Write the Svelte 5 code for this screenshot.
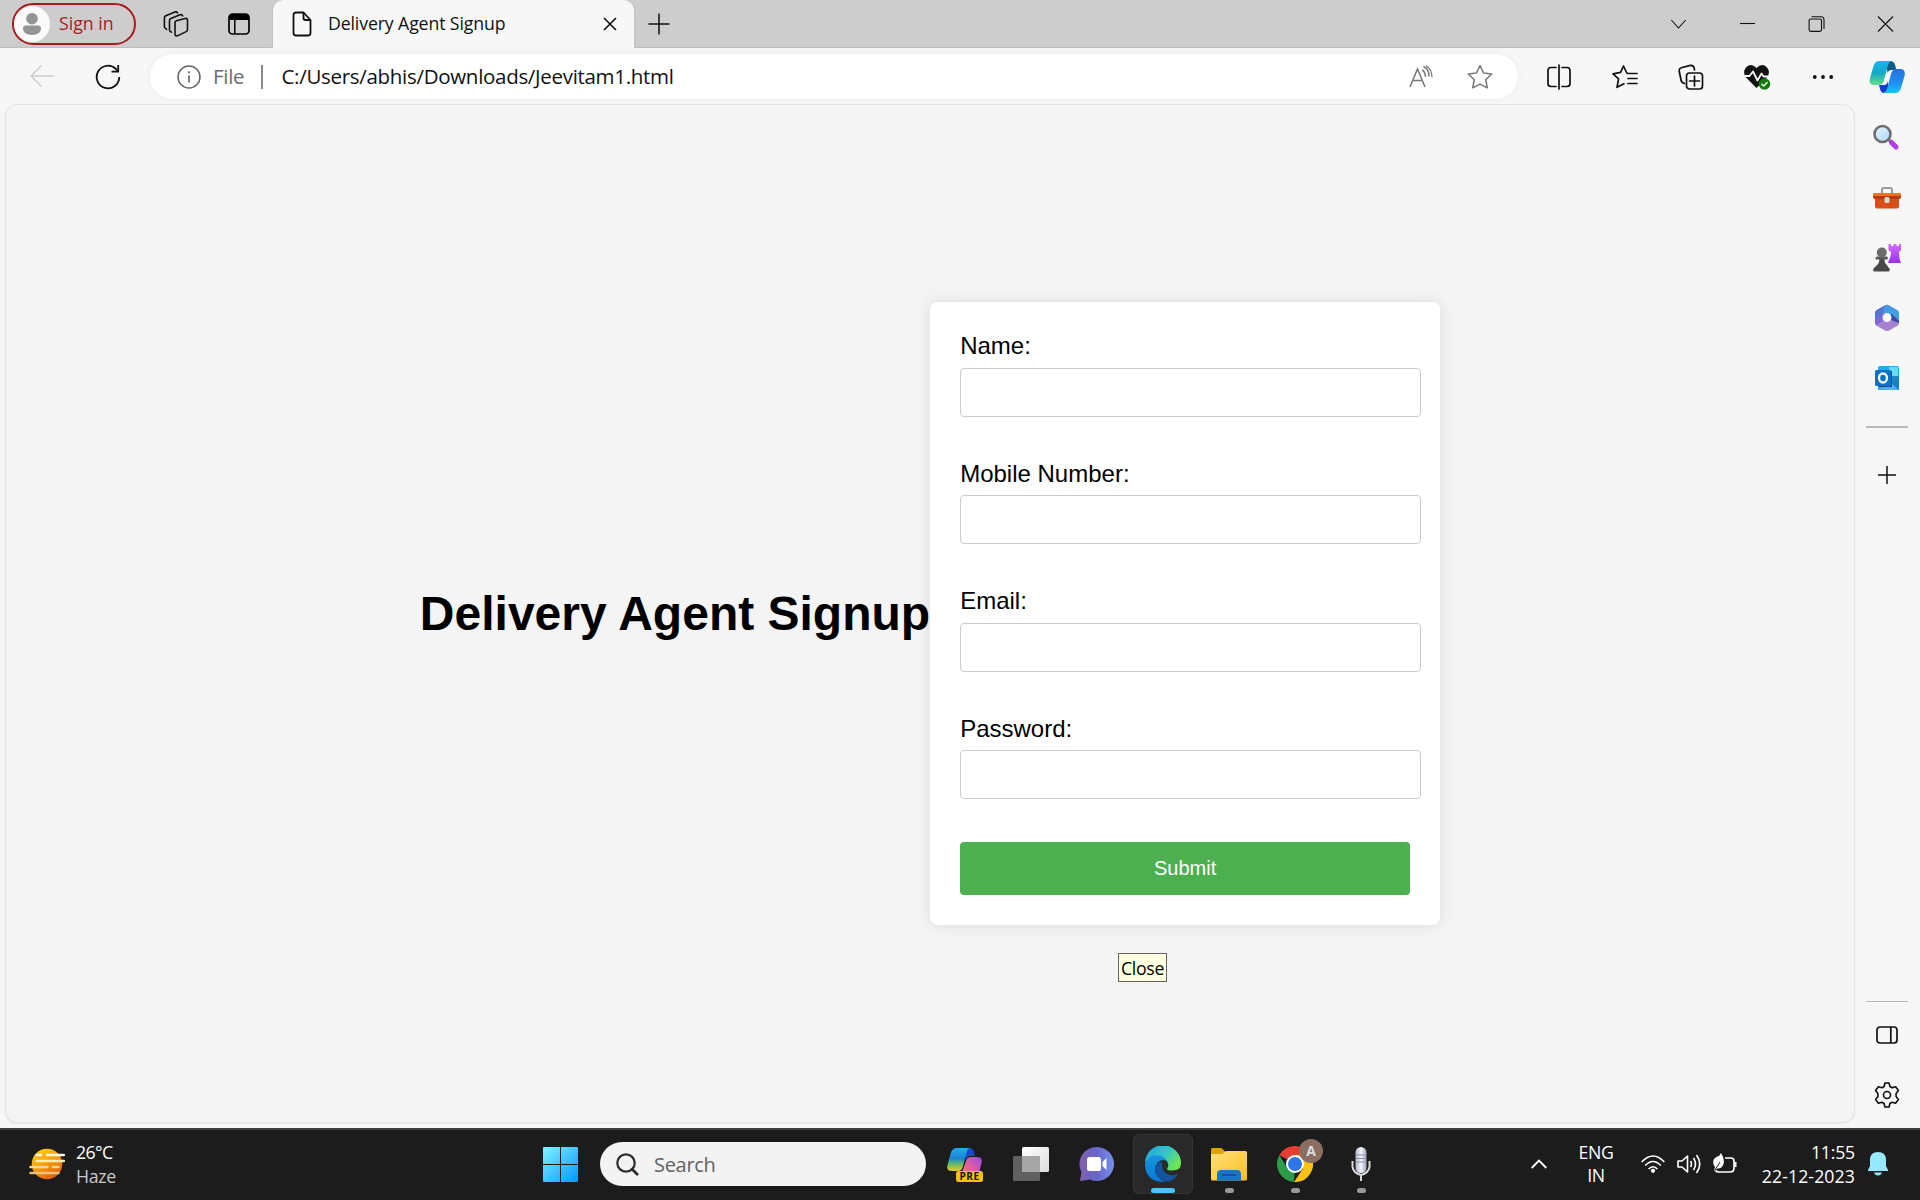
<script>
  const fields = [
    { id: 'name', label: 'Name:', type: 'text' },
    { id: 'mobile', label: 'Mobile Number:', type: 'tel' },
    { id: 'email', label: 'Email:', type: 'email' },
    { id: 'password', label: 'Password:', type: 'password' }
  ];
</script>

<div class="desktop">
  <header class="tabs">
    <div class="signin">
      <svg width="36" height="36" viewBox="0 0 36 36"><circle cx="18" cy="18" r="18" fill="#fafafa" /><circle cx="18" cy="12.700" r="5.800" fill="#949494" /><path d="M9 22.500q0-3 3-3h12q3 0 3 3 0 6.500-9 6.500t-9-6.500z" fill="#949494" /></svg>
      <span>Sign in</span>
    </div>
    <svg class="workspaces" width="26" height="26" viewBox="0 0 26 26" fill="none" stroke="#111" stroke-width="1.600" stroke-linejoin="round" stroke-linecap="round">
      <path d="M12 11.700q0-1.500 1.400-2l8.800-2.200q2.300-.6 2.300 1.700v9.300q0 1.400-1.300 2.100l-8.300 4q-2.900 1-2.900-1.600z" />
      <path d="M8.400 21.200l-1.200-.8q-.7-.5-.7-1.600V9.500q0-1.500 1.400-2.100l9-3.600q2-.6 2.800 1" />
      <path d="M3.600 18.300l-1.500-1.300q-.7-.6-.7-1.600V6.800q0-1.500 1.400-2.100L11.900 1q1.800-.5 2.600.8" />
    </svg>
    <svg class="actions" width="22" height="22" viewBox="0 0 22 22"><rect x="1" y="1" width="20" height="20" rx="3.500" fill="none" stroke="#000" stroke-width="1.700" /><path d="M1 7V4q0-3 3-3h14q3 0 3 3v3z" /><path d="M6.800 7v14" stroke="#000" stroke-width="1.500" /></svg>
    <div class="tab">
      <svg width="20" height="26" viewBox="0 0 20 26" fill="none" stroke="#111" stroke-width="1.800" stroke-linejoin="round"><path d="M4 1.500h7.500L18.500 9v13q0 2.500-2.500 2.500H4q-2.500 0-2.500-2.500V4q0-2.500 2.500-2.500z" /><path d="M11.500 1.500V7q0 2 2 2h5" /></svg>
      <span>Delivery Agent Signup</span>
      <svg class="tabclose" width="14" height="14" viewBox="0 0 14 14" stroke="#111" stroke-width="1.600"><path d="M1 1l12 12M13 1L1 13" /></svg>
    </div>
    <svg class="newtab" width="22" height="22" viewBox="0 0 22 22" stroke="#111" stroke-width="1.500"><path d="M11 .5v21M.5 11h21" /></svg>
    <div class="window">
      <svg width="16" height="16" viewBox="0 0 16 16"><path d="M.8 4l7.200 8 7.200-8" /></svg>
      <svg width="16" height="16" viewBox="0 0 16 16"><path d="M.5 7.500h15" /></svg>
      <svg width="16" height="16" viewBox="0 0 16 16"><rect x=".6" y="3" width="12.400" height="12.400" rx="1.600" /><path d="M3 .7h9.500q3 0 3 3V13" /></svg>
      <svg width="16" height="16" viewBox="0 0 16 16"><path d="M.5.5l15 15M15.500.5l-15 15" /></svg>
    </div>
  </header>

  <div class="toolbar">
    <svg class="back" width="24" height="24" viewBox="0 0 24 24" fill="none" stroke="#cfcfcf" stroke-width="1.500"><path d="M24 11H1M11.500.5L1 11l10.500 10.500" /></svg>
    <svg class="reload" width="26" height="26" viewBox="0 0 26 26" fill="none" stroke="#111" stroke-width="1.800"><path d="M24.300 13A11.300 11.300 0 1 1 21 5l2 2.300" /><path d="M23.200 1v6.600h-6.700" /></svg>
    <div class="address">
      <svg class="info" width="24" height="24" viewBox="0 0 24 24" fill="none" stroke="#666" stroke-width="1.500"><circle cx="12" cy="12" r="11" /><path d="M12 10.500v7" stroke-width="1.700" /><circle cx="12" cy="7.300" r="1.100" fill="#666" stroke="none" /></svg>
      <span class="scheme">File</span>
      <i></i>
      <span class="url">C:/Users/abhis/Downloads/Jeevitam1.html</span>
      <svg class="read" width="24" height="24" viewBox="0 0 24 24" fill="none" stroke="#777" stroke-width="1.500"><path d="M1 22L8.500 4 16 22M3.700 15.500h9.700" /><path d="M13 5q3.500 1.800 3.500 7M14.500 1.500q5.500 2.500 5.500 10" /><path d="M17 .8q6 3.500 6 11.500" stroke-width="1.300" /></svg>
      <svg class="star" width="26" height="26" viewBox="0 0 26 26" fill="none" stroke="#777" stroke-width="1.500" stroke-linejoin="round"><path d="M13 1.500l3.500 7.400 8.200 1.100-6 5.700 1.600 8.100L13 20.200l-7.300 3.600 1.600-8.100-6-5.700 8.200-1.100z" /></svg>
    </div>
    <div class="tools">
      <svg width="26" height="26" viewBox="0 0 26 26"><path d="M10 3.500H5Q2 3.500 2 6.500v13q0 3 3 3h5M16 3.500h5q3 0 3 3v13q0 3-3 3h-5M13 1v24" /></svg>
      <svg width="26" height="26" viewBox="0 0 26 26"><path d="M15.500 9.500l-1-1L11.500 2 8.500 8.300 1 9.800l5.600 5-1.600 8.500 7-3.500M16 9.500h9M16 14.500h9M16 19.500h9" /></svg>
      <svg width="26" height="26" viewBox="0 0 26 26"><rect x="8.500" y="9" width="16" height="16" rx="3" /><path d="M16.500 12v10M11.500 17h10M6.500 19.500Q3.500 18.500 3 16L1.200 7Q.8 4.500 3.300 3.700l9-2.300q3-.5 3.800 2.300l.4 2.300" /></svg>
      <svg width="28" height="28" viewBox="0 0 28 28"><path d="M13.500 25L2.500 14Q-.5 8.500 3 4.500q5-5 10.500.5Q19-.5 24 4.500q3.500 4 .5 9.500z" fill="#111" stroke="none" /><path d="M0 13h6.500L10 8.500l4.500 9 4-7 2 3H28" stroke="#f7f7f7" stroke-width="1.800" /><circle cx="21.500" cy="21" r="5.800" fill="#14780f" stroke="none" /><path d="M18.900 21.300l1.800 1.800 3.500-3.700" stroke="#fff" stroke-width="1.400" /></svg>
      <svg width="26" height="26" viewBox="0 0 26 26"><g fill="#111" stroke="none"><circle cx="4.800" cy="13" r="1.900" /><circle cx="13" cy="13" r="1.900" /><circle cx="21.200" cy="13" r="1.900" /></g></svg>
    </div>
    <svg class="copilot" width="36" height="34" viewBox="0 0 36 34">
      <defs>
        <linearGradient id="cpa" x1="0" y1="0" x2="0" y2="1"><stop stop-color="#18b5ef" /><stop offset=".5" stop-color="#14a9c6" /><stop offset="1" stop-color="#63df88" /></linearGradient>
        <linearGradient id="cpb" x1="0" y1="0" x2="0" y2="1"><stop stop-color="#2870db" /><stop offset=".6" stop-color="#1d91f4" /><stop offset="1" stop-color="#20c2f5" /></linearGradient>
      </defs>
      <path d="M17 1h4q4 0 5 4l1.500 5h-5q-3 0-4 3z" fill="#125a86" />
      <path d="M19 33h-4q-3 0-4-4l-1-4h5q3 0 4-4z" fill="#183ec9" />
      <path d="M10 1h12q-2 1-3 4l-4 15q-1 5-5 5H5q-6 0-4-7L4.500 6Q6 1 10 1z" fill="url(#cpa)" />
      <path d="M26 33H14q3-1 4-4l4-15q1.500-5 5-5h4q6 0 4.500 7L32 28q-1.500 5-6 5z" fill="url(#cpb)" />
    </svg>
  </div>

  <div class="workspace">
    <main class="page">
      <h1>Delivery Agent Signup</h1>
      <form>
        {#each fields as field}
          <div class="field">
            <label for={field.id}>{field.label}</label>
            <input id={field.id} type={field.type} />
          </div>
        {/each}
        <button type="button">Submit</button>
      </form>
      <div class="tooltip">Close</div>
    </main>

    <aside class="sidebar">
      <svg width="28" height="28" viewBox="0 0 28 28"><defs><linearGradient id="lens" x1="0" y1="0" x2="1" y2="1"><stop stop-color="#e8f6ff" /><stop offset="1" stop-color="#a9d9f8" /></linearGradient></defs><path d="M15 15l4 4" stroke="#777" stroke-width="3" /><path d="M18.500 18.500l4.500 4.500" stroke="#b53be9" stroke-width="5" stroke-linecap="round" /><circle cx="9.500" cy="10" r="8" fill="url(#lens)" stroke="#6e6e6e" stroke-width="2.600" /></svg>
      <svg width="28" height="28" viewBox="0 0 28 28"><path d="M9 9V6q0-2 2-2h6q2 0 2 2v3" fill="none" stroke="#9b9b9b" stroke-width="2.200" /><rect x="2" y="12" width="24" height="12.500" rx="2" fill="#d94d1b" /><path d="M2 9h24q2 0 2 2v2q0 2-2 2H2q-2 0-2-2v-2q0-2 2-2z" fill="#b93911" /><path d="M0 12v-1q0-2 2-2h24q2 0 2 2v1z" fill="#ee731f" /><rect x="11.500" y="13" width="5" height="6" rx="1.500" fill="#d8d8d8" /></svg>
      <svg width="28" height="28" viewBox="0 0 28 28"><defs><linearGradient id="rook" x1="0" y1="0" x2="0" y2="1"><stop stop-color="#d36bff" /><stop offset="1" stop-color="#9931ed" /></linearGradient></defs><path d="M15.500 0h2.500v2h2.500V0h3v2H26V0h2v6l-2 2q0 6 1 8l1 3H15l1-3q2-3 2-8l-2.500-2z" fill="url(#rook)" /><path d="M6.500 14h5q-.3 5 2.500 7l1 2 1.500 1.500q1 3-1.500 3H2q-2.500 0-1.500-3L3 22q3.500-2 3.500-8z" fill="#484848" /><rect x="2.500" y="12.500" width="12.500" height="3" rx="1.500" fill="#595959" /><circle cx="8.800" cy="8.500" r="5" fill="#6b6b6b" /></svg>
      <svg width="28" height="28" viewBox="0 0 28 28"><path d="M12 1.400q2-1.200 4 0l8 4.500q2 1 2 3.500v9q0 2.500-2 3.500l-8 4.600q-2 1.200-4 0L4 22q-2-1-2-3.500v-9Q2 7 4 6z" fill="#a582d0" /><path d="M12 1.400q2-1.200 4 0l8 4.500q2 1 2 3.500V17l-6.500-4L11 11V1.900z" fill="#409ee8" /><path d="M4 6l8-4.600q-1.500 1.200-1.500 4V16L5 20q-1.500 1-3 0V9.500Q2 7 4 6z" fill="#7f67dc" /><path d="M4 6l8-4.600q-1.500 1.200-1.500 4V9L2 15V9.500Q2 7 4 6z" fill="#5376cf" /><path d="M18 9.500l8 7.500v2l-8-3z" fill="#3f45aa" /><circle cx="14" cy="13.600" r="4.500" fill="#f7f7f7" /></svg>
      <svg width="28" height="28" viewBox="0 0 28 28"><path d="M7 2h17q2 0 2 2v22H5V4q0-2 2-2z" fill="#28a8ea" /><path d="M16 3h9v9h-9z" fill="#65dcff" /><path d="M6 12h20v6l-9 2z" fill="#158ad0" /><path d="M17 19l9-5v12H6l11-7z" fill="#127fc4" /><path d="M5 26l12-8 9 8z" fill="#34baf1" /><rect x="5" y="7" width="14" height="16" fill="#12548b" /><rect x="2" y="6" width="16" height="16" rx="1.500" fill="#0873c6" /><ellipse cx="10" cy="14" rx="4" ry="4.500" fill="none" stroke="#fff" stroke-width="2.300" /></svg>
      <hr class="thick" />
      <svg class="add" width="18" height="18" viewBox="0 0 18 18" stroke="#111" stroke-width="1.500"><path d="M9 0v18M0 9h18" /></svg>
      <hr class="lower" />
      <svg class="panel" width="22" height="18" viewBox="0 0 22 18" fill="none" stroke="#111" stroke-width="1.700"><rect x="1" y="1" width="20" height="16" rx="3" /><path d="M14.800 1v16" /></svg>
      <svg class="gear" width="26" height="26" viewBox="0 0 26 26" fill="none" stroke="#111" stroke-width="1.600" stroke-linejoin="round"><path d="M10.900 1h4.200l.8 3.500 2.200 1.300 3.500-1.100 2.800 3.800-2.300 3v3l2.300 3-2.800 3.800-3.500-1.100-2.200 1.300-.8 3.500h-4.200l-.8-3.500-2.200-1.300-3.500 1.100-2.800-3.800 2.300-3v-3l-2.300-3 2.800-3.800 3.500 1.100 2.200-1.300z" /><circle cx="13" cy="13" r="3.500" /></svg>
    </aside>
  </div>

  <footer class="taskbar">
    <svg class="weather" width="36" height="32" viewBox="0 0 36 32"><defs><linearGradient id="sun" x1=".2" y1="0" x2=".8" y2="1"><stop stop-color="#ffd115" /><stop offset=".5" stop-color="#f69a0a" /><stop offset="1" stop-color="#dc4e0b" /></linearGradient></defs><circle cx="18" cy="16" r="15.300" fill="url(#sun)" /><g stroke-width="2.500" stroke-linecap="round" fill="none"><path d="M7.500 7H12M18 7h17" stroke="#fff5d8" /><path d="M7.500 13H35" stroke="#ffedb9" /><path d="M1.500 19h17M24 19h5.500" stroke="#f8d899" /><path d="M1.500 25h28" stroke="#eac080" /></g></svg>
    <div class="forecast"><span class="temp">26°C</span><span class="haze">Haze</span></div>
    <svg class="start" width="35" height="35" viewBox="0 0 35 35"><defs><linearGradient id="win" gradientUnits="userSpaceOnUse" x1="0" y1="0" x2="35" y2="35"><stop stop-color="#7ef4ff" /><stop offset="1" stop-color="#0795ff" /></linearGradient></defs><path fill="url(#win)" d="M1 0h16v17H0V1q0-1 1-1zM18 0h16q1 0 1 1v16H18zM0 18h17v17H1q-1 0-1-1zM18 18h17v16q0 1-1 1H18z" /></svg>
    <div class="search"><svg width="23" height="23" viewBox="0 0 23 23" fill="none" stroke="#2c2c2c" stroke-width="2.200" stroke-linecap="round"><circle cx="10" cy="10" r="8.700" /><path d="M16.200 16.200l5 5" stroke-width="2.800" /></svg><span>Search</span></div>

    <div class="apps">
      <div class="app">
        <svg width="36" height="36" viewBox="0 0 36 36"><defs><linearGradient id="pa" x1="0" y1="0" x2="0" y2="1"><stop stop-color="#27a9ef" /><stop offset=".45" stop-color="#1884d3" /><stop offset=".7" stop-color="#62ba69" /><stop offset="1" stop-color="#e6ce23" /></linearGradient><linearGradient id="pb" x1="1" y1="0" x2="0" y2="1"><stop stop-color="#964cf0" /><stop offset=".55" stop-color="#e55b9d" /><stop offset="1" stop-color="#fb8067" /></linearGradient></defs><path d="M17 2h5q4 0 5 4l1 4h-4q-4 0-5 5z" fill="#1749c8" /><path d="M10 2h14q-3 0-4 3l-4 15q-1 5-5 5H5q-6 0-4.500-6L4 6q2-4 6-4z" fill="url(#pa)" /><path d="M14 29l5-14q1.500-4 5-4h6q6 0 4.500 6l-3 12z" fill="url(#pb)" /><rect x="9" y="25" width="27" height="11" rx="2.500" fill="#f5bf10" /></svg>
        <b class="pre">PRE</b>
      </div>
      <div class="app"><svg width="36" height="36" viewBox="0 0 36 36"><defs><linearGradient id="tv" x1="0" y1="0" x2="1" y2="1"><stop stop-color="#fff" /><stop offset="1" stop-color="#ddd" /></linearGradient></defs><rect x="9" y="1" width="27" height="25" rx="1.500" fill="url(#tv)" /><rect y="10" width="27" height="25" rx="1.500" fill="#606060" /><path d="M9 10h18v16H9z" fill="#a6a6a6" /></svg></div>
      <div class="app"><svg width="36" height="36" viewBox="0 0 36 36"><defs><linearGradient id="chat" x1="0" y1="0" x2="1" y2="0"><stop stop-color="#8160ad" /><stop offset=".5" stop-color="#6667c8" /><stop offset="1" stop-color="#7591e9" /></linearGradient></defs><path d="M18 1a17 17 0 1 1-7 32.500L1 35l1.500-9A17 17 0 0 1 18 1z" fill="url(#chat)" /><rect x="8" y="11" width="14" height="14" rx="2.500" fill="#fff" /><path d="M23.500 16l4-4v12l-4-4z" fill="#fff" /></svg></div>
      <div class="app active">
        <svg width="36" height="36" viewBox="0 0 36 36"><defs><linearGradient id="ea" x1="0" y1="0" x2="1" y2=".6"><stop stop-color="#229fe1" /><stop offset=".55" stop-color="#31c5c9" /><stop offset="1" stop-color="#70e453" /></linearGradient><linearGradient id="eb" x1="0" y1="0" x2="0" y2="1"><stop stop-color="#1795df" /><stop offset="1" stop-color="#0779d4" /></linearGradient></defs><path d="M0 17A18 18 0 0 1 36 17.500q0 7-9 7-5 0-5-2 2-2 1-5-2-6-10-7.500Q5 9 0 17z" fill="url(#ea)" /><path d="M0 18q3-9 11-9 8 0 12 7-2-2-5-2-8 1-8 10 1 8 10 12Q0 36 0 18z" fill="url(#eb)" /><path d="M14 16q-6 5-3 12 4 8 13 7.500 6-2 9.500-8-5 3-10 1-8-3-6-12-2 0-3.500-.5z" fill="#14549e" /></svg>
        <i class="running wide"></i>
      </div>
      <div class="app">
        <svg width="36" height="36" viewBox="0 0 36 36"><defs><linearGradient id="fold" x1="0" y1="0" x2="1" y2="1"><stop stop-color="#ffe07b" /><stop offset="1" stop-color="#fbc021" /></linearGradient></defs><path d="M1.500 2h9l4 4v5H0V3.500Q0 2 1.500 2z" fill="#dda206" /><path d="M0 8h11l4-3h19.500q1.500 0 1.500 1.500V33q0 1.500-1.500 1.500h-33Q0 34.500 0 33z" fill="url(#fold)" /><path d="M6 34.500V28q0-4 4-4h16q4 0 4 4v6.500z" fill="#1478c8" /><path d="M11 29h14" stroke="#0a4e89" stroke-width="1.500" /></svg>
        <i class="running"></i>
      </div>
      <div class="app">
        <svg width="36" height="36" viewBox="0 0 36 36"><path d="M18 18L2.400 9A18 18 0 0 1 33.600 9H18z" fill="#e63d32" /><path d="M18 18L17 36A18 18 0 0 1 2.400 9l8 13.500z" fill="#2a9c4a" /><path d="M18 9h15.600A18 18 0 0 1 17 36l9-13.500z" fill="#fbc116" /><circle cx="18" cy="18" r="9" fill="#fff" /><circle cx="18" cy="18" r="7" fill="#2e76e7" /></svg>
        <span class="profile">A</span>
        <i class="running"></i>
      </div>
      <div class="app">
        <svg width="36" height="36" viewBox="0 0 36 36"><defs><linearGradient id="mic"><stop stop-color="#aeb3c0" /><stop offset=".5" stop-color="#f3f6ff" /><stop offset="1" stop-color="#a2a7b4" /></linearGradient></defs><path d="M9.500 15v6q1 6 8.500 8 7.500-2 8.500-8v-6M18 29v6" fill="none" stroke="#d7d7dc" stroke-width="2" /><rect x="12.500" y="1" width="11" height="26" rx="5.500" fill="url(#mic)" /><path d="M13 9h10M13 12.500h10M13 16h10" stroke="#8b909d" /></svg>
        <i class="running"></i>
      </div>
    </div>

    <svg class="chevron" width="16" height="10" viewBox="0 0 16 10" fill="none" stroke="#fff" stroke-width="1.800"><path d="M.7 9L8 1.500 15.300 9" /></svg>
    <div class="lang"><span>ENG</span><span>IN</span></div>
    <svg class="wifi" width="24" height="20" viewBox="0 0 24 20" fill="none" stroke="#fff" stroke-width="1.700"><path d="M.7 8Q12-4 23.300 8M4.200 11.500q7.800-8 15.600 0M7.600 15q4.400-4.500 8.800 0" /><circle cx="12" cy="16.800" r="2.100" fill="#fff" stroke="none" /></svg>
    <svg class="sound" width="24" height="22" viewBox="0 0 24 22" fill="none" stroke="#fff" stroke-width="1.600" stroke-linejoin="round"><path d="M1 8v6h4l5.500 5V3L5 8zM13.500 8q2 3 0 6M16.500 5q4 6 0 12M19.500 2q6.500 9 0 18" /></svg>
    <svg class="battery" width="25" height="22" viewBox="0 0 25 22"><path d="M12 5h6q3 0 3 3v7q0 4-4 4H6q-2.500 0-3.500-1.500" fill="none" stroke="#fff" stroke-width="1.700" /><path d="M21.500 9h2v5h-2zM8 0q4 6 2.500 11-1.500 4.500-6 4.500L1 18l1-4Q-1 10 1 6q2-2.500 5-3z" fill="#fff" /><path d="M2 17l5-8" stroke="#1c1c1c" /></svg>
    <div class="clock"><span class="time">11:55</span><span class="date">22-12-2023</span></div>
    <svg class="bell" width="20" height="24" viewBox="0 0 20 24" fill="#96e9ff"><path d="M10 0q8 0 8 8v6l2 4v1H0v-1l2-4V8q0-8 8-8zM6 20.500h8q-1 3-4 3t-4-3z" /></svg>
  </footer>
</div>

<style>
  :global(body) { margin: 0; overflow: hidden; }
  * { box-sizing: border-box; }
  svg { display: block; flex: none; }
  span { white-space: nowrap; }
  .desktop { width: 1920px; height: 1200px; display: flex; flex-direction: column; background: #f7f7f7; font-family: "Open Sans", "Noto Sans", sans-serif; color: #111; overflow: hidden; }

  .tabs { height: 48px; display: flex; align-items: center; background: #cdcdcd; box-shadow: inset 0 -1px #bebebe; flex: none; }
  .signin { width: 124px; height: 42px; margin-left: 12px; border: 2px solid #aa1b1b; border-radius: 21px; display: flex; align-items: center; color: #aa1b1b; font-size: 17.700px; }
  .signin span { margin-left: 9px; padding-bottom: 2px; }
  .workspaces { margin-left: 27px; }
  .actions { margin-left: 39px; }
  .tab { width: 361px; height: 48px; margin-left: 23px; background: #f7f7f7; border-radius: 10px 10px 0 0; box-shadow: 0 0 2px #aaa; display: flex; align-items: center; padding: 0 17px 0 19px; font-size: 17.700px; clip-path: inset(0 -3px 0 -3px); }
  .tab span { margin-left: 16px; padding-bottom: 2px; letter-spacing: -.12px; }
  .tabclose { margin-left: auto; }
  .newtab { margin-left: 14px; }
  .window { margin-left: auto; display: flex; }
  .window svg { width: 69px; fill: none; stroke: #111; stroke-width: 1.100; }

  .toolbar { height: 56px; display: flex; align-items: center; flex: none; padding-top: 1px; }
  .back { margin-left: 30px; }
  .reload { margin-left: 41px; }
  .address { width: 1368px; height: 45px; margin-left: 29px; border-radius: 23px; background: #fff; box-shadow: 0 0 7px #0000000e; display: flex; align-items: center; font-size: 20.500px; }
  .info { margin-left: 27px; }
  .scheme { margin-left: 12px; padding-bottom: 1px; color: #6c6c6c; width: 32px; letter-spacing: -.3px; }
  .address i { width: 1.500px; height: 24px; background: #888; margin-left: 16px; }
  .url { margin-left: 19px; padding-bottom: 1px; letter-spacing: -.3px; }
  .read { margin-left: auto; }
  .star { margin: 0 25px 0 34px; }
  .tools { display: flex; margin-left: 8px; align-items: center; }
  .tools svg { width: 66px; fill: none; stroke: #111; stroke-width: 1.700; stroke-linecap: round; stroke-linejoin: round; }
  .copilot { margin-left: 13px; }

  .workspace { display: flex; height: 1024px; flex: none; }
  .page { position: relative; width: 1850px; height: 1019px; margin-left: 5px; border: 1px solid #e3e3e3; border-radius: 12px; background: #f4f4f4; box-shadow: 0 1px 2px #0001; display: flex; justify-content: center; align-items: center; font-family: "Liberation Sans", Arial, sans-serif; color: #000; }
  h1 { margin: 0; font-size: 48px; line-height: 56px; white-space: nowrap; }
  form { width: 510px; height: 623px; padding: 30px; background: #fff; border-radius: 7.500px; box-shadow: 0 0 15px #0000001a; }
  .field { height: 127.500px; }
  label { display: block; font-size: 24px; line-height: 27px; height: 35.700px; }
  input { display: block; width: 461px; height: 49px; border: 1px solid #ccc; border-radius: 4px; background: #fff; padding: 12px; outline: 0; }
  button { display: block; width: 450px; height: 53px; border: 0; border-radius: 4px; background: #4caf50; color: #fff; font: 20px "Liberation Sans", Arial, sans-serif; }
  .tooltip { position: absolute; left: 1112px; top: 848px; width: 49px; height: 29px; border: 1px solid #636363; background: #ffffe1; font: 17.700px/29px "Open Sans", sans-serif; letter-spacing: -.3px; text-align: center; }

  .sidebar { width: 64px; display: flex; flex-direction: column; align-items: center; padding-top: 20px; }
  .sidebar > svg:nth-child(-n+5) { margin-bottom: 32px; }
  hr { border: 0; margin: 0; width: 42px; height: 1px; background: #bbb; flex: none; }
  hr.thick { height: 2px; margin-top: 2px; }
  .add { margin-top: 38px; }
  .lower { margin-top: 517px; }
  .panel { margin-top: 24px; }
  .gear { margin-top: 38px; }

  .taskbar { height: 72px; border-top: 2px solid #3f3f3f; background: #1c1c1c; color: #fff; display: flex; align-items: center; font-size: 17.700px; flex: none; padding-bottom: 2px; }
  .weather { margin-left: 29px; }
  .forecast { width: 60px; margin-left: 11px; display: flex; flex-direction: column; line-height: 24px; }
  .temp { letter-spacing: -.6px; }
  .haze { color: #c8c8c8; letter-spacing: -.3px; }
  .start { margin-left: 407px; }
  .search { width: 326px; height: 44px; margin-left: 22px; border-radius: 22px; background: #f3f3f3; display: flex; align-items: center; font-size: 20px; color: #626262; padding-left: 16px; }
  .search span { margin-left: 15px; letter-spacing: -.3px; }
  .apps { display: flex; margin-left: 6px; }
  .app { position: relative; width: 60px; height: 60px; margin: 0 3px; display: flex; align-items: center; justify-content: center; border-radius: 6px; }
  .active { background: #292929; box-shadow: inset 0 0 0 1px #353535; }
  .running { position: absolute; bottom: 1px; left: 25.500px; width: 9px; height: 5px; border-radius: 3px; background: #999; }
  .wide { left: 18px; width: 24px; background: #4cc2ff; }
  .pre { position: absolute; left: 21px; top: 37px; width: 27px; font-size: 10px; line-height: 11px; text-align: center; color: #171300; letter-spacing: .5px; }
  .profile { position: absolute; left: 34px; top: 5px; width: 24px; height: 24px; border-radius: 50%; background: #8b6e63; color: #ddd; font: bold 14px/24px "Open Sans", sans-serif; text-align: center; }
  .chevron { margin-left: 137px; }
  .lang { width: 50px; margin-left: 24px; display: flex; flex-direction: column; line-height: 23px; text-align: center; letter-spacing: -.3px; }
  .wifi { margin-left: 20px; }
  .sound { margin-left: 12px; }
  .battery { margin-left: 12px; }
  .clock { width: 106px; margin-left: 11px; display: flex; flex-direction: column; text-align: right; line-height: 24px; }
  .time { letter-spacing: -.2px; }
  .date { letter-spacing: .1px; }
  .bell { margin-left: 13px; }
</style>
